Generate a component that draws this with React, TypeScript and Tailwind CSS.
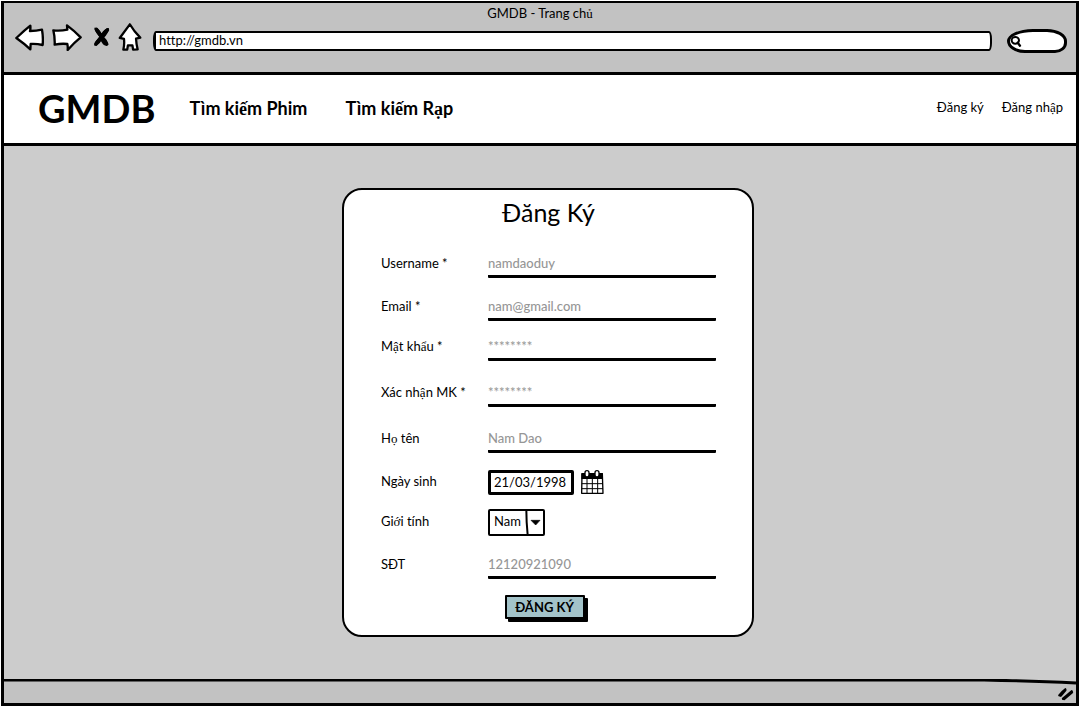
import React from "react";

const SERIF_CHARS = /([ếạủậẩọớ])/;

function Text({ children }: { children: string }) {
  return (
    <>
      {children.split(SERIF_CHARS).map((part, i) =>
        SERIF_CHARS.test(part) ? (
          <span key={i} className="font-['Liberation_Serif',serif]">
            {part}
          </span>
        ) : (
          part
        ),
      )}
    </>
  );
}

const outline = {
  fill: "white",
  stroke: "black",
  strokeWidth: 7,
  strokeLinejoin: "round" as const,
  strokeLinecap: "round" as const,
};

function BrowserBar() {
  return (
    <header className="bg-[#c2c2c2] pb-[21px]">
      <div className="h-5 text-center leading-5">
        <Text>GMDB - Trang chủ</Text>
      </div>
      <div className="flex h-7 items-center pr-[9px] pl-[11px]">
        <button type="button" aria-label="Back" className="shrink-0">
          <svg className="block h-[27px] w-[29px]" viewBox="45 69 87 81">
            <path {...outline} d="M49 111 L73 89 L91 74 Q92 82 90 90 Q109 90 126 86 Q130 108 128 132 Q110 128 92 129 L91 145 Q73 128 49 111 Z" />
          </svg>
        </button>
        <button type="button" aria-label="Forward" className="ml-2 shrink-0">
          <svg className="block h-[27px] w-[30px]" viewBox="156 70 90 81">
            <path {...outline} d="M160 89 Q182 91 202 87 L201 74 Q224 91 242 110 Q222 126 203 148 Q204 139 202 130 Q184 128 164 132 Q165 110 160 89 Z" />
          </svg>
        </button>
        <button type="button" aria-label="Stop" className="ml-[11px] shrink-0">
          <svg className="block h-[27px] w-[17px]" viewBox="280 69 51 81">
            <path
              fill="none"
              stroke="black"
              strokeWidth="11"
              strokeLinecap="round"
              d="M290 85 Q300 100 321 129 M323 87 Q305 105 289 129"
            />
            <path d="M284 80 Q293 79 299 87 L307 98 L303 110 Q287 97 284 80 Z M305 99 Q313 82 328 81 Q327 98 311 112 Z M301 109 L306 118 Q297 134 284 134 Q282 121 301 109 Z M309 106 Q324 115 325 130 Q318 137 310 130 L301 116 Z" />
          </svg>
        </button>
        <button type="button" aria-label="Home" className="ml-2 shrink-0">
          <svg className="block h-7 w-6" viewBox="354 67 73 86">
            <path {...outline} d="M390 71 Q402 92 422 112 L409 115 Q410 133 414 148 L400 149 L398 136 L384 136 L382 149 L370 149 Q374 132 372 116 L359 113 Q373 94 390 71 Z" />
          </svg>
        </button>
        <input
          aria-label="Address"
          defaultValue="http://gmdb.vn"
          className="ml-[11px] h-5 min-w-0 flex-1 self-end rounded-[3px/8px] border-2 border-l-[3px] border-black bg-white pr-2 pb-0.5 pl-[3px] outline-none"
        />
        <div className="mt-2 ml-[15px] flex h-6 w-[60px] shrink-0 items-center rounded-[26px_20px_12px_18px/12px_12px_10px_12px] border-[3px] border-black bg-white">
          <svg className="block h-3 w-3 shrink-0" viewBox="0 0 36 36" aria-hidden="true">
            <ellipse cx="16" cy="16" rx="11" ry="10" fill="none" stroke="black" strokeWidth="6" />
            <path d="M23 23 L30 32" stroke="black" strokeWidth="7" strokeLinecap="round" />
          </svg>
          <input aria-label="Search" className="w-full min-w-0 flex-1 bg-transparent outline-none" />
        </div>
      </div>
    </header>
  );
}

function SiteNav() {
  return (
    <nav className="flex h-[74px] items-center border-y-[3px] border-black bg-white pr-[13px] pb-0.5 pl-[34px]">
      <a href="#" className="text-[38px] leading-10 font-bold">
        GMDB
      </a>
      <a href="#phim" className="ml-[34px] text-lg font-bold whitespace-nowrap">
        <Text>Tìm kiếm Phim</Text>
      </a>
      <a href="#rap" className="ml-[38px] text-lg font-bold whitespace-nowrap">
        <Text>Tìm kiếm Rạp</Text>
      </a>
      <a href="#dang-ky" className="ml-auto whitespace-nowrap">
        Đăng ký
      </a>
      <a href="#dang-nhap" className="ml-[18px] whitespace-nowrap">
        <Text>Đăng nhập</Text>
      </a>
    </nav>
  );
}

function Row({ id, label, gap, children }: { id: string; label: string; gap: string; children: React.ReactNode }) {
  return (
    <div className={`flex h-7 items-center ${gap}`}>
      <label htmlFor={id} className="w-[107px] shrink-0">
        <Text>{label}</Text>
      </label>
      {children}
    </div>
  );
}

function LineField({ id, label, hint, gap, type = "text" }: { id: string; label: string; hint: string; gap: string; type?: string }) {
  return (
    <Row id={id} label={label} gap={gap}>
      <input
        id={id}
        type={type}
        placeholder={hint}
        className="h-7 min-w-0 flex-1 rounded-[1px] border-b-[3px] border-black bg-transparent font-medium outline-none placeholder:text-[#969696]"
      />
    </Row>
  );
}

function CalendarIcon() {
  return (
    <svg className="block h-6 w-6" viewBox="630 30 72 72" aria-hidden="true">
      <path d="M636 41 L697 41 L699 100 L635 100 Z" fill="white" stroke="black" strokeWidth="4" strokeLinejoin="round" />
      <path d="M634 40 L699 40 L699 57 L634 57 Z" />
      <path d="M651 57 V100 M667 57 V100 M683 57 V100 M635 71 H699 M635 86 H699" stroke="black" strokeWidth="3" />
      <rect x="645" y="32" width="12" height="19" rx="6" fill="white" stroke="black" strokeWidth="4" />
      <rect x="675" y="32" width="12" height="19" rx="6" fill="white" stroke="black" strokeWidth="4" />
    </svg>
  );
}

function RegisterForm() {
  return (
    <form
      className="w-full max-w-[412px] rounded-[20px] border-2 border-black bg-white pt-1 pr-9 pb-4 pl-[37px]"
      onSubmit={(e) => e.preventDefault()}
    >
      <h1 className="text-center text-[25px] leading-9">Đăng Ký</h1>
      <LineField id="username" label="Username *" hint="namdaoduy" gap="mt-5" />
      <LineField id="email" label="Email *" hint="nam@gmail.com" gap="mt-[15px]" />
      <LineField id="password" label="Mật khẩu *" hint="********" gap="mt-3" type="password" />
      <LineField id="confirm" label="Xác nhận MK *" hint="********" gap="mt-[18px]" type="password" />
      <LineField id="name" label="Họ tên" hint="Nam Dao" gap="mt-[18px]" />
      <Row id="birthday" label="Ngày sinh" gap="mt-[15px]">
        <input
          id="birthday"
          defaultValue="21/03/1998"
          className="h-[25px] w-[86px] rounded-[2px] border-[3px] border-black bg-white px-[3px] outline-none"
        />
        <button type="button" aria-label="Calendar" className="ml-1.5">
          <CalendarIcon />
        </button>
      </Row>
      <Row id="gender" label="Giới tính" gap="mt-3">
        <div className="relative">
          <select
            id="gender"
            defaultValue="Nam"
            className="block h-[27px] w-[57px] appearance-none rounded-[2px] border-2 border-black bg-white pl-1 outline-none"
          >
            <option>Nam</option>
            <option>Nữ</option>
          </select>
          <svg className="pointer-events-none absolute top-0 right-0 h-[27px] w-5" viewBox="0 0 60 81" aria-hidden="true">
            <path d="M4 3 Q4 40 8 78" fill="none" stroke="black" strokeWidth="6" />
            <path d="M18 34 H45 L32 48 Z" stroke="black" strokeWidth="2" strokeLinejoin="round" />
          </svg>
        </div>
      </Row>
      <LineField id="phone" label="SĐT" hint="12120921090" gap="mt-[15px]" />
      <div className="mt-4 flex justify-center pr-2">
        <button
          type="submit"
          className="h-6 w-20 rounded-[1px] border-2 border-black bg-[#a3c3c9] leading-5 font-bold whitespace-nowrap shadow-[3px_3px_0_#000]"
        >
          ĐĂNG KÝ
        </button>
      </div>
    </form>
  );
}

export default function App() {
  return (
    <div className="flex min-h-screen bg-white p-px font-['Lato',sans-serif] text-[13px] text-black [font-variant-ligatures:none]">
      <div className="flex w-full flex-col border-[3px] border-t-2 border-black">
        <BrowserBar />
        <SiteNav />
        <main className="flex flex-1 items-center justify-center bg-[#cccccc] pl-4">
          <RegisterForm />
        </main>
        <footer className="flex flex-col bg-[#c2c2c2]">
          <svg className="block h-2 w-full" viewBox="0 0 1072 8" preserveAspectRatio="none" aria-hidden="true">
            <path d="M0 0 H1072 V4 Q1020 1 980 1 H0 Z" fill="#cccccc" />
            <path d="M0 1 L980 1 Q1030 2 1072 4" fill="none" stroke="black" strokeWidth="3" />
          </svg>
          <div className="flex h-4 items-start justify-end pr-0.5">
            <svg className="block h-[14px] w-[17px]" viewBox="293 142 51 42" aria-hidden="true">
              <path
                d="M300 167 Q307 157 318 149 M304 168 L318 152 M311 177 Q321 169 337 155 M314 178 L338 158"
                fill="none"
                stroke="black"
                strokeWidth="7"
                strokeLinecap="round"
              />
            </svg>
          </div>
        </footer>
      </div>
    </div>
  );
}
